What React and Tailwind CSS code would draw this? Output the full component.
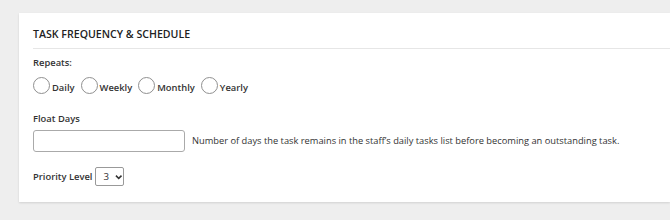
export default function App() {
  const options = ['Daily', 'Weekly', 'Monthly', 'Yearly']

  return (
    <div className="w-[670px] h-[220px] bg-[#eeeeee] pl-[19px] pt-[13px] overflow-hidden font-['Open_Sans',sans-serif] text-[#333]">
      <div className="bg-white pt-[13px] pb-[16px] pl-[14px] shadow-[0_1px_2px_rgba(0,0,0,0.12)]">
        {/* Header */}
        <h2 className="text-[10.6px] leading-[16px] font-semibold text-[#222]">
          TASK FREQUENCY &amp; SCHEDULE
        </h2>
        <div className="mt-[6px] h-px bg-[#e6e6e6]"></div>

        {/* Repeats */}
        <div className="mt-[7px] text-[9.4px] leading-[14px] font-semibold">Repeats:</div>
        <div className="mt-[7px] flex items-end gap-[6px]">
          {options.map((opt) => (
            <label key={opt} className="flex items-end">
              <span className="w-[17px] h-[17px] rounded-full border border-[#909090] bg-white"></span>
              <span className="ml-[2px] text-[9.4px] leading-[12px] font-semibold">{opt}</span>
            </label>
          ))}
        </div>

        {/* Float days */}
        <div className="mt-[18px] text-[9.4px] leading-[14px] font-semibold">Float Days</div>
        <div className="mt-[4px] flex items-center">
          <input type="text" className="w-[152px] h-[22px] border border-[#aaaaaa] rounded-[3px] outline-none" />
          <span className="ml-[7px] text-[9.3px] leading-[14px]">
            Number of days the task remains in the staff’s daily tasks list before becoming an outstanding task.
          </span>
        </div>

        {/* Priority */}
        <div className="mt-[15px] flex items-center">
          <span className="text-[9.4px] leading-[14px] font-semibold">Priority Level</span>
          <div className="ml-[2px] w-[29px] h-[19px] border border-[#999] rounded-[2px] flex items-center pl-[8px] gap-[6px]">
            <span className="text-[9.7px] leading-[14px]">3</span>
            <svg width="8" height="6" viewBox="0 0 8 6" className="mt-[1px]">
              <path d="M1 1.5 L4 4.5 L7 1.5" fill="none" stroke="#333" strokeWidth="1.6" />
            </svg>
          </div>
        </div>
      </div>
    </div>
  )
}
